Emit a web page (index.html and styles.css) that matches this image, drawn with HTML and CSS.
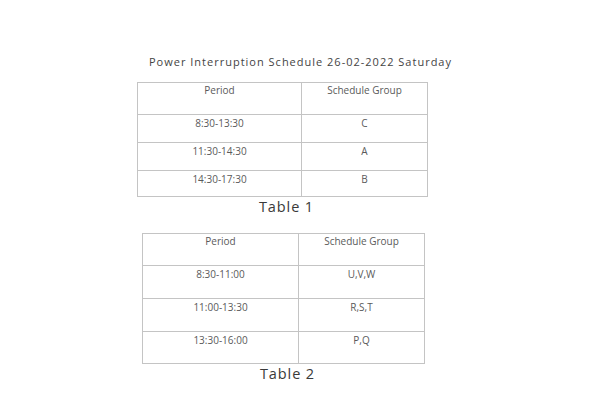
FILE: index.html
```html
<!DOCTYPE html>
<html>
<head>
<meta charset="utf-8">
<link rel="stylesheet" href="styles.css">
</head>
<body>
<div class="page">
  <h1 class="title">Power Interruption Schedule 26-02-2022 Saturday</h1>
  <table class="sched sched-1">
    <tr class="head"><td class="c1">Period</td><td class="c2">Schedule Group</td></tr>
    <tr class="r1"><td>8:30-13:30</td><td>C</td></tr>
    <tr class="r2"><td>11:30-14:30</td><td>A</td></tr>
    <tr class="r3"><td>14:30-17:30</td><td>B</td></tr>
    <caption>Table 1</caption>
  </table>
  <table class="sched sched-2">
    <tr class="head"><td class="c1">Period</td><td class="c2">Schedule Group</td></tr>
    <tr class="r1"><td>8:30-11:00</td><td>U,V,W</td></tr>
    <tr class="r2"><td>11:00-13:30</td><td>R,S,T</td></tr>
    <tr class="r3"><td>13:30-16:00</td><td>P,Q</td></tr>
    <caption>Table 2</caption>
  </table>
</div>
</body>
</html>
```
FILE: styles.css
```css
html, body {
  margin: 0;
  padding: 0;
  background: #ffffff;
}
.page {
  width: 600px;
  height: 400px;
  padding-top: 54px;
  box-sizing: border-box;
  font-family: "Open Sans", "Liberation Sans", sans-serif;
}
.title {
  margin: 0;
  font-size: 11px;
  line-height: 15px;
  font-weight: 400;
  letter-spacing: 1px;
  color: #444;
  text-align: center;
  padding-left: 1px;
}
.sched {
  border-collapse: collapse;
  table-layout: fixed;
}
.sched td {
  border: 1px solid #c4c4c4;
  padding: 1px 0 0 0;
  text-align: center;
  vertical-align: top;
  font-size: 10px;
  line-height: 13px;
  color: #5a5a5a;
  box-sizing: border-box;
}
.sched caption {
  caption-side: bottom;
  font-size: 14.5px;
  line-height: 16px;
  letter-spacing: 0.9px;
  color: #3a3a3a;
  padding-left: 8px;
  padding-top: 2px;
}
.sched-1 {
  margin: 13px 0 0 137px;
  width: 291px;
}
.sched-1 .c1 { width: 164px; }
.sched-1 .head td { height: 32px; }
.sched-1 .r1 td { height: 28px; padding-top: 2px; }
.sched-1 .r2 td { height: 28px; padding-top: 2px; }
.sched-1 .r3 td { height: 26px; padding-top: 2px; }

.sched-2 {
  margin: 18px 0 0 142px;
  width: 283px;
}
.sched-2 .c1 { width: 156px; }
.sched-2 .head td { height: 32px; }
.sched-2 .r1 td { height: 33px; padding-top: 2px; }
.sched-2 .r2 td { height: 33px; padding-top: 2px; }
.sched-2 .r3 td { height: 32px; padding-top: 2px; }
```
